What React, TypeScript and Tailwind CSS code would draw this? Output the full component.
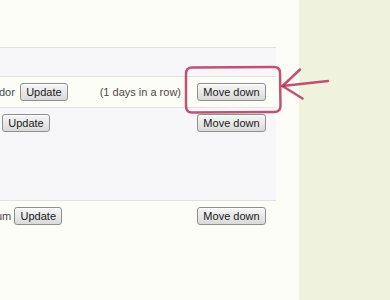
import React from "react";

const btn =
  "h-[18px] whitespace-nowrap rounded-[3px] border border-[#8f8f8f] bg-gradient-to-b from-[#f7f7f7] to-[#dadada] text-[11px] leading-[16px] text-[#1a1a1a] px-0 text-center shadow-[inset_0_1px_0_#fff]";

export default function App() {
  return (
    <div
      className="relative flex w-[390px] h-[300px] overflow-hidden bg-[#fdfdf7]"
      style={{ fontFamily: '"Liberation Sans", Arial, sans-serif' }}
    >
      <div className="w-[299px] flex flex-col">
        <div className="w-[276px] flex flex-col">
          <div className="h-[47px]" />
          <div className="h-[29px] border-t border-[#e2e2e2] bg-[#f7f7f9]" />
          <div className="h-[31px] border-t border-[#e2e2e2] flex items-center pr-[10px]">
            <span className="text-[11px] text-[#4a4a4a] -ml-[1px]">dor</span>
            <button className={`${btn} ml-[5px] w-[48px]`}>Update</button>
            <span className="ml-auto text-[11px] text-[#4a4a4a]">(1 days in a row)</span>
            <button className={`${btn} ml-[16px] w-[69px]`}>Move down</button>
          </div>
          <div className="h-[93px] border-t border-[#e2e2e2] bg-[#f7f7f9] flex items-start pt-[6px] pl-[2px] pr-[10px]">
            <button className={`${btn} w-[48px]`}>Update</button>
            <button className={`${btn} ml-auto w-[69px]`}>Move down</button>
          </div>
          <div className="h-[30px] border-t border-[#e2e2e2] flex items-start pt-[6px] pr-[10px]">
            <span className="text-[11px] text-[#4a4a4a] leading-[18px] -ml-[4px]">um</span>
            <button className={`${btn} ml-[3px] w-[48px]`}>Update</button>
            <button className={`${btn} ml-auto w-[69px]`}>Move down</button>
          </div>
        </div>
      </div>
      <div className="flex-1 bg-[#eff2dc]" />
      <svg
        className="absolute left-0 top-0 pointer-events-none"
        width="390"
        height="300"
        viewBox="0 0 390 300"
      >
        <g
          fill="none"
          stroke="#b8325a"
          strokeOpacity="0.85"
          strokeWidth="2.5"
          strokeLinecap="round"
          strokeLinejoin="round"
        >
          <path d="M192 67.5 L274 67 Q280 67 280 73 L280.5 106 Q280.5 112 274 112 L192 112.5 Q186 112.5 186 106 L186 74 Q186 67.5 192 67.5 Z" />
          <path d="M282.5 86 L328 81" />
          <path d="M282.5 86 L300 69.5" />
          <path d="M282.5 86 L302.5 98.5" />
        </g>
      </svg>
    </div>
  );
}
